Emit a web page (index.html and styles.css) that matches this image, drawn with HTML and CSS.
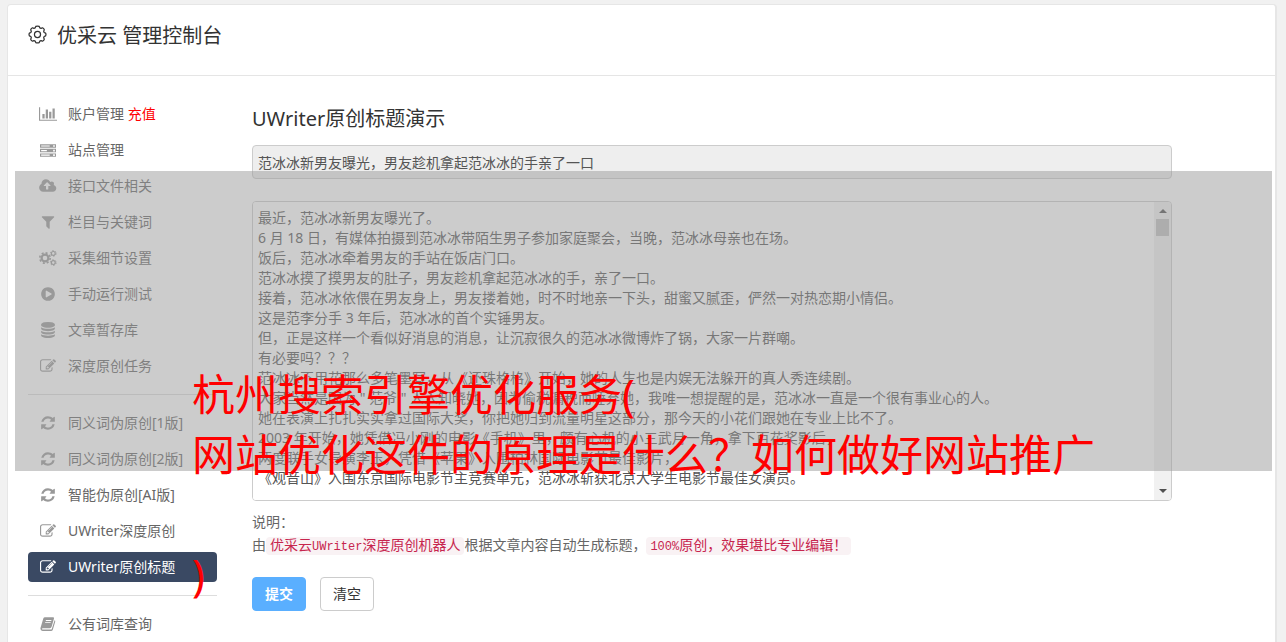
FILE: index.html
```
<!DOCTYPE html>
<html lang="zh-CN">
<head>
<meta charset="UTF-8">
<title>优采云 管理控制台</title>
<link rel="stylesheet" href="styles.css">
</head>
<body>
<!-- 图标 -->
<svg class="sprite" aria-hidden="true">
  <symbol id="i-chart" viewBox="0 0 2048 1792"><path d="M640 896v512h-256v-512h256zm384-512v1024h-256v-1024h256zm1024 1152v128h-2048v-1536h128v1408h1920zm-640-896v768h-256v-768h256zm384-384v1152h-256v-1152h256z"/></symbol>
  <symbol id="i-server" viewBox="0 0 1792 1792"><path fill-rule="evenodd" d="M0 256h1792v384h-1792zM128 384v128h960v-128zM1472 352v192h192v-192zM0 768h1792v384h-1792zM128 896v128h640v-128zM1472 864v192h192v-192zM0 1280h1792v384h-1792zM128 1408v128h960v-128zM1472 1376v192h192v-192z"/></symbol>
  <symbol id="i-cloud" viewBox="0 0 1856 1792"><path d="M1216 864q0-14-9-23l-352-352q-9-9-23-9t-23 9l-351 351q-10 12-10 24 0 14 9 23t23 9h224v352q0 13 9.5 22.5t22.5 9.5h192q13 0 22.5-9.5t9.5-22.5v-352h224q13 0 22.5-9.5t9.5-22.5zm640 288q0 159-112.5 271.5t-271.5 112.5h-1088q-185 0-316.5-131.5t-131.5-316.5q0-130 70-240t188-165q-2-30-2-43 0-212 150-362t362-150q156 0 285.5 87t188.5 231q71-62 166-62 106 0 181 75t75 181q0 76-41 138 130 31 213.5 135.5t83.5 238.5z"/></symbol>
  <symbol id="i-filter" viewBox="0 0 1792 1792"><path d="M1595 295q17 41-14 70l-493 493v742q0 42-39 59-13 5-25 5-27 0-45-19l-256-256q-19-19-19-45v-486l-493-493q-31-29-14-70 17-39 59-39h1280q42 0 59 39z"/></symbol>
  <symbol id="i-cogs" viewBox="0 0 18 16">
    <g fill="none" stroke="currentColor">
      <circle cx="6" cy="8" r="3.4" stroke-width="2.2"/>
      <circle cx="6" cy="8" r="5.2" stroke-width="1.6" stroke-dasharray="2.04 2.04"/>
      <circle cx="14.3" cy="3.4" r="1.9" stroke-width="1.2"/>
      <circle cx="14.3" cy="3.4" r="2.8" stroke-width="1" stroke-dasharray="1.47 1.47"/>
      <circle cx="14.3" cy="12.6" r="1.9" stroke-width="1.2"/>
      <circle cx="14.3" cy="12.6" r="2.8" stroke-width="1" stroke-dasharray="1.47 1.47"/>
    </g>
  </symbol>
  <symbol id="i-play" viewBox="0 0 1792 1792"><path d="M896 128q209 0 385.5 103t279.5 279.5 103 385.5-103 385.5-279.5 279.5-385.5 103-385.5-103-279.5-279.5-103-385.5 103-385.5 279.5-279.5 385.5-103zm384 823q32-18 32-55t-32-55l-544-320q-31-19-64-1-32 19-32 56v640q0 37 32 56 16 8 32 8 17 0 32-9z"/></symbol>
  <symbol id="i-database" viewBox="0 0 1792 1792"><path d="M896 768q237 0 443-43t325-127v170q0 69-103 128t-280 93.5-385 34.5-385-34.5-280-93.5-103-128v-170q119 84 325 127t443 43zm0 768q237 0 443-43t325-127v170q0 69-103 128t-280 93.5-385 34.5-385-34.5-280-93.5-103-128v-170q119 84 325 127t443 43zm0-384q237 0 443-43t325-127v170q0 69-103 128t-280 93.5-385 34.5-385-34.5-280-93.5-103-128v-170q119 84 325 127t443 43zm0-1152q208 0 385 34.5t280 93.5 103 128v128q0 69-103 128t-280 93.5-385 34.5-385-34.5-280-93.5-103-128v-128q0-69 103-128t280-93.5 385-34.5z"/></symbol>
  <symbol id="i-edit" viewBox="0 0 1792 1792"><path d="M888 1184l116-116-152-152-116 116v56h96v96h56zm440-720q-16-16-33 1l-350 350q-17 17-1 33t33-1l350-350q17-17 1-33zm80 594v190q0 119-84.5 203.5t-203.5 84.5h-832q-119 0-203.5-84.5t-84.5-203.5v-832q0-119 84.5-203.5t203.5-84.5h832q63 0 117 25 15 7 18 23 3 17-9 29l-49 49q-14 14-32 8-23-6-45-6h-832q-66 0-113 47t-47 113v832q0 66 47 113t113 47h832q66 0 113-47t47-113v-126q0-13 9-22l64-64q15-15 35-7t20 29zm-96-738l288 288-672 672h-288v-288zm444 132l-92 92-288-288 92-92q28-28 68-28t68 28l152 152q28 28 28 68t-28 68z"/></symbol>
  <symbol id="i-refresh" viewBox="0 0 1792 1792"><path d="M1639 1056q0 5-1 7-64 268-268 434.5t-478 166.5q-146 0-282.5-55t-243.5-157l-129 129q-19 19-45 19t-45-19-19-45v-448q0-26 19-45t45-19h448q26 0 45 19t19 45-19 45l-137 137q71 66 161 102t187 36q134 0 250-65t186-179q11-17 53-117 8-23 30-23h192q13 0 22.5 9.5t9.5 22.5zm25-800v448q0 26-19 45t-45 19h-448q-26 0-45-19t-19-45 19-45l138-138q-148-137-349-137-134 0-250 65t-186 179q-11 17-53 117-8 23-30 23h-199q-13 0-22.5-9.5t-9.5-22.5v-7q65-268 270-434.5t480-166.5q146 0 284 55.5t245 156.5l130-129q19-19 45-19t45 19 19 45z"/></symbol>
  <symbol id="i-book" viewBox="0 0 16 16"><path fill-rule="evenodd" d="M5 1.2h8q1.3 0 1 1.3l-2.4 8.300q-.4 1.400-1.800 1.400H2.800q-.9 0-.8.700.1.700 1 .700h8q.6 0 .8-.600L14.600 4.300q.9.500.6 1.400l-2.400 8q-.4 1.300-1.800 1.300H2.600Q.4 15 .4 12.600q0-.7.300-1.400L3.300 2.500Q3.700 1.200 5 1.200zM6 4l-.3.900h5.500l.3-.9zM5.300 6.200l-.3.900h5.500l.3-.9z"/></symbol>
  <symbol id="i-gear" viewBox="0 0 20 20">
    <g fill="none" stroke="currentColor" stroke-width="1.300" stroke-linejoin="round">
      <path d="M8.200 1.500Q10 .7 11.800 1.500l.6 1.500 1.400.6 1.500-.7q1.500.7 1.900 2.200l-.7 1.500.5 1.300 1.500.7q.8 1.400 0 2.800l-1.500.7-.5 1.300.7 1.500q-.4 1.500-1.900 2.200l-1.500-.7-1.400.6-.6 1.500q-1.800.8-3.600 0l-.6-1.500-1.400-.6-1.500.7q-1.500-.7-1.900-2.200l.7-1.500-.5-1.300-1.500-.7q-.8-1.400 0-2.800l1.500-.7.5-1.300-.7-1.500q.4-1.500 1.900-2.200l1.500.7L7.600 3z"/>
      <circle cx="10" cy="10" r="3.200"/>
    </g>
  </symbol>
</svg>

<div class="panel">
  <header class="panel-header">
    <svg class="gear"><use href="#i-gear"/></svg>
    <h1>优采云 管理控制台</h1>
  </header>
  <div class="panel-body">
    <nav class="sidebar">
      <ul class="menu">
        <li><a href="#"><svg class="icon wide"><use href="#i-chart"/></svg><span>账户管理 <span class="red">充值</span></span></a></li>
        <li><a href="#"><svg class="icon"><use href="#i-server"/></svg>站点管理</a></li>
        <li><a href="#"><svg class="icon wide"><use href="#i-cloud"/></svg>接口文件相关</a></li>
        <li><a href="#"><svg class="icon"><use href="#i-filter"/></svg>栏目与关键词</a></li>
        <li><a href="#"><svg class="icon wide"><use href="#i-cogs"/></svg>采集细节设置</a></li>
        <li><a href="#"><svg class="icon"><use href="#i-play"/></svg>手动运行测试</a></li>
        <li><a href="#"><svg class="icon"><use href="#i-database"/></svg>文章暂存库</a></li>
        <li><a href="#"><svg class="icon"><use href="#i-edit"/></svg>深度原创任务</a></li>
      </ul>
      <ul class="menu">
        <li><a href="#"><svg class="icon"><use href="#i-refresh"/></svg>同义词伪原创[1版]</a></li>
        <li><a href="#"><svg class="icon"><use href="#i-refresh"/></svg>同义词伪原创[2版]</a></li>
        <li><a href="#"><svg class="icon"><use href="#i-refresh"/></svg>智能伪原创[AI版]</a></li>
        <li><a href="#"><svg class="icon"><use href="#i-edit"/></svg>UWriter深度原创</a></li>
        <li><a href="#" class="active"><svg class="icon"><use href="#i-edit"/></svg>UWriter原创标题</a></li>
      </ul>
      <ul class="menu">
        <li><a href="#"><svg class="icon"><use href="#i-book"/></svg>公有词库查询</a></li>
      </ul>
    </nav>
    <main class="content">
      <h2 id="demo-title">UWriter原创标题演示</h2>
      <form>
        <input class="title-input" type="text" aria-labelledby="demo-title" readonly value="范冰冰新男友曝光，男友趁机拿起范冰冰的手亲了一口">
        <div class="article">
          <textarea aria-labelledby="demo-title">最近，范冰冰新男友曝光了。
6 月 18 日，有媒体拍摄到范冰冰带陌生男子参加家庭聚会，当晚，范冰冰母亲也在场。
饭后，范冰冰牵着男友的手站在饭店门口。
范冰冰摸了摸男友的肚子，男友趁机拿起范冰冰的手，亲了一口。
接着，范冰冰依偎在男友身上，男友搂着她，时不时地亲一下头，甜蜜又腻歪，俨然一对热恋期小情侣。
这是范李分手 3 年后，范冰冰的首个实锤男友。
但，正是这样一个看似好消息的消息，让沉寂很久的范冰冰微博炸了锅，大家一片群嘲。
有必要吗？？？
范冰冰不用花那么多笔墨写，从《还珠格格》开始，她的人生也是内娱无法躲开的真人秀连续剧。
大家当然是因为 " 范爷 " 人人知晓她，因为偷税漏税而唾弃她，我唯一想提醒的是，范冰冰一直是一个很有事业心的人。
她在表演上扎扎实实拿过国际大奖，你把她归到流量明星这部分，那今天的小花们跟她在专业上比不了。
2003 年开始，她凭借冯小刚的电影《手机》里，颇有心机的小三武月一角，拿下百花奖影后，
两度联手女导演李玉，凭借《苹果》入围柏林国际电影节最佳影片，
《观音山》入围东京国际电影节主竞赛单元，范冰冰斩获北京大学生电影节最佳女演员。</textarea>
          <div class="scrollbar"><i class="arrow up"></i><i class="thumb"></i><i class="arrow down"></i></div>
        </div>
        <p class="note">说明：<br>由<code>优采云<span class="latin">UWriter</span>深度原创机器人</code>根据文章内容自动生成标题，<code><span class="latin">100%</span>原创，效果堪比专业编辑！</code></p>
        <div class="buttons">
          <button type="submit" class="btn primary">提交</button>
          <button type="reset" class="btn">清空</button>
        </div>
      </form>
    </main>
  </div>
</div>

<div class="caption">杭州搜索引擎优化服务(<br>网站优化这件的原理是什么？如何做好网站推广<br><br>)</div>
</body>
</html>
```
FILE: styles.css
```
* {
  box-sizing: border-box;
}

html {
  height: 100%;
  overflow: hidden;
}

body {
  position: relative;
  margin: 0;
  padding: 4px 9px 0 7px;
  background-color: #f1f1f1;
  color: #555;
  font: 14px/20px "Noto Sans", "Noto Sans CJK SC", sans-serif;
}

h1, h2, p, ul {
  margin: 0;
  padding: 0;
  font-weight: normal;
}

.sprite {
  display: none;
}

.panel {
  min-height: 660px;
  background-color: #fff;
  border: 1px solid #e6e6e6;
  border-right-width: 2px;
  border-radius: 4px;
}

.panel-header {
  display: flex;
  align-items: flex-start;
  gap: 10px;
  height: 71px;
  padding: 17px 20px 0;
  border-bottom: 1px solid #e5e5e5;
  color: #333;
}

.panel-header h1 {
  font-size: 20px;
  line-height: 28px;
}

.gear {
  width: 19px;
  height: 19px;
  margin-top: 3px;
}

.panel-body {
  display: flex;
  gap: 35px;
  padding: 23px 103px 0 20px;
}

/* 左侧菜单 */
.sidebar {
  flex: none;
  width: 189px;
}

.menu {
  list-style: none;
  display: flex;
  flex-direction: column;
  gap: 6px;
}

.menu + .menu {
  margin-top: 13px;
  padding-top: 13px;
  border-top: 1px solid #ddd;
}

.menu a {
  display: flex;
  align-items: center;
  height: 30px;
  padding-left: 40px;
  border-radius: 4px;
  color: #666;
  text-decoration: none;
}

.menu .active {
  background-color: #3a4963;
  color: #fff;
}

.icon {
  flex: none;
  width: 16px;
  height: 16px;
  margin-left: -28px;
  margin-right: 12px;
  color: #999;
  fill: currentColor;
}

.icon.wide {
  width: 18px;
  margin-left: -29px;
  margin-right: 11px;
}

.active .icon {
  color: #fff;
}

.red {
  color: #f00;
}

/* 右侧内容 */
.content {
  flex: 1;
  min-width: 0;
  padding-top: 6px;
}

.content h2 {
  margin-bottom: 12px;
  color: #333;
  font-size: 20px;
  line-height: 28px;
}

.title-input {
  display: block;
  width: 100%;
  height: 34px;
  padding: 0 5px;
  background-color: #eee;
  border: 1px solid #ccc;
  border-radius: 4px;
  color: #555;
  font: inherit;
}

.article {
  display: flex;
  height: 300px;
  margin-top: 22px;
  border: 1px solid #ccc;
  border-radius: 4px;
  overflow: hidden;
}

.article textarea {
  flex: 1;
  padding: 6px 5px;
  border: 0;
  outline: 0;
  resize: none;
  overflow: hidden;
  background-color: #fff;
  color: #555;
  font: inherit;
}

.scrollbar {
  display: flex;
  flex-direction: column;
  align-items: center;
  width: 17px;
  padding: 7px 0;
  background-color: #f1f1f1;
}

.arrow {
  border: 4px solid transparent;
}

.arrow.up {
  border-top: 0;
  border-bottom-color: #505050;
}

.arrow.down {
  margin-top: auto;
  border-bottom: 0;
  border-top-color: #505050;
}

.thumb {
  width: 13px;
  height: 17px;
  margin-top: 6px;
  background-color: #c1c1c1;
}

.note {
  margin-top: 9px;
  color: #666;
  line-height: 23px;
}

.note code {
  padding: 1px 4px;
  border-radius: 4px;
  background-color: #f9f2f4;
  color: #c7254e;
  font-family: "Liberation Mono", "Noto Sans CJK SC", monospace;
  font-size: 14px;
}

.note .latin {
  font-size: 12px;
}

.buttons {
  display: flex;
  gap: 14px;
  margin-top: 18px;
}

.btn {
  height: 34px;
  padding: 0 12px;
  background-color: #fff;
  border: 1px solid #ccc;
  border-radius: 4px;
  color: #333;
  font: inherit;
}

.btn.primary {
  background-color: #5aafff;
  border-color: #5aafff;
  color: #fff;
  font-weight: bold;
}

/* 覆盖在页面上的标题 */
.caption {
  position: absolute;
  top: 171px;
  left: 15px;
  right: 14px;
  height: 300px;
  padding: 194px 0 0 177px;
  background-color: rgba(153, 153, 153, .5);
  color: #f00;
  font-size: 43px;
  line-height: 60px;
  white-space: nowrap;
}
```
